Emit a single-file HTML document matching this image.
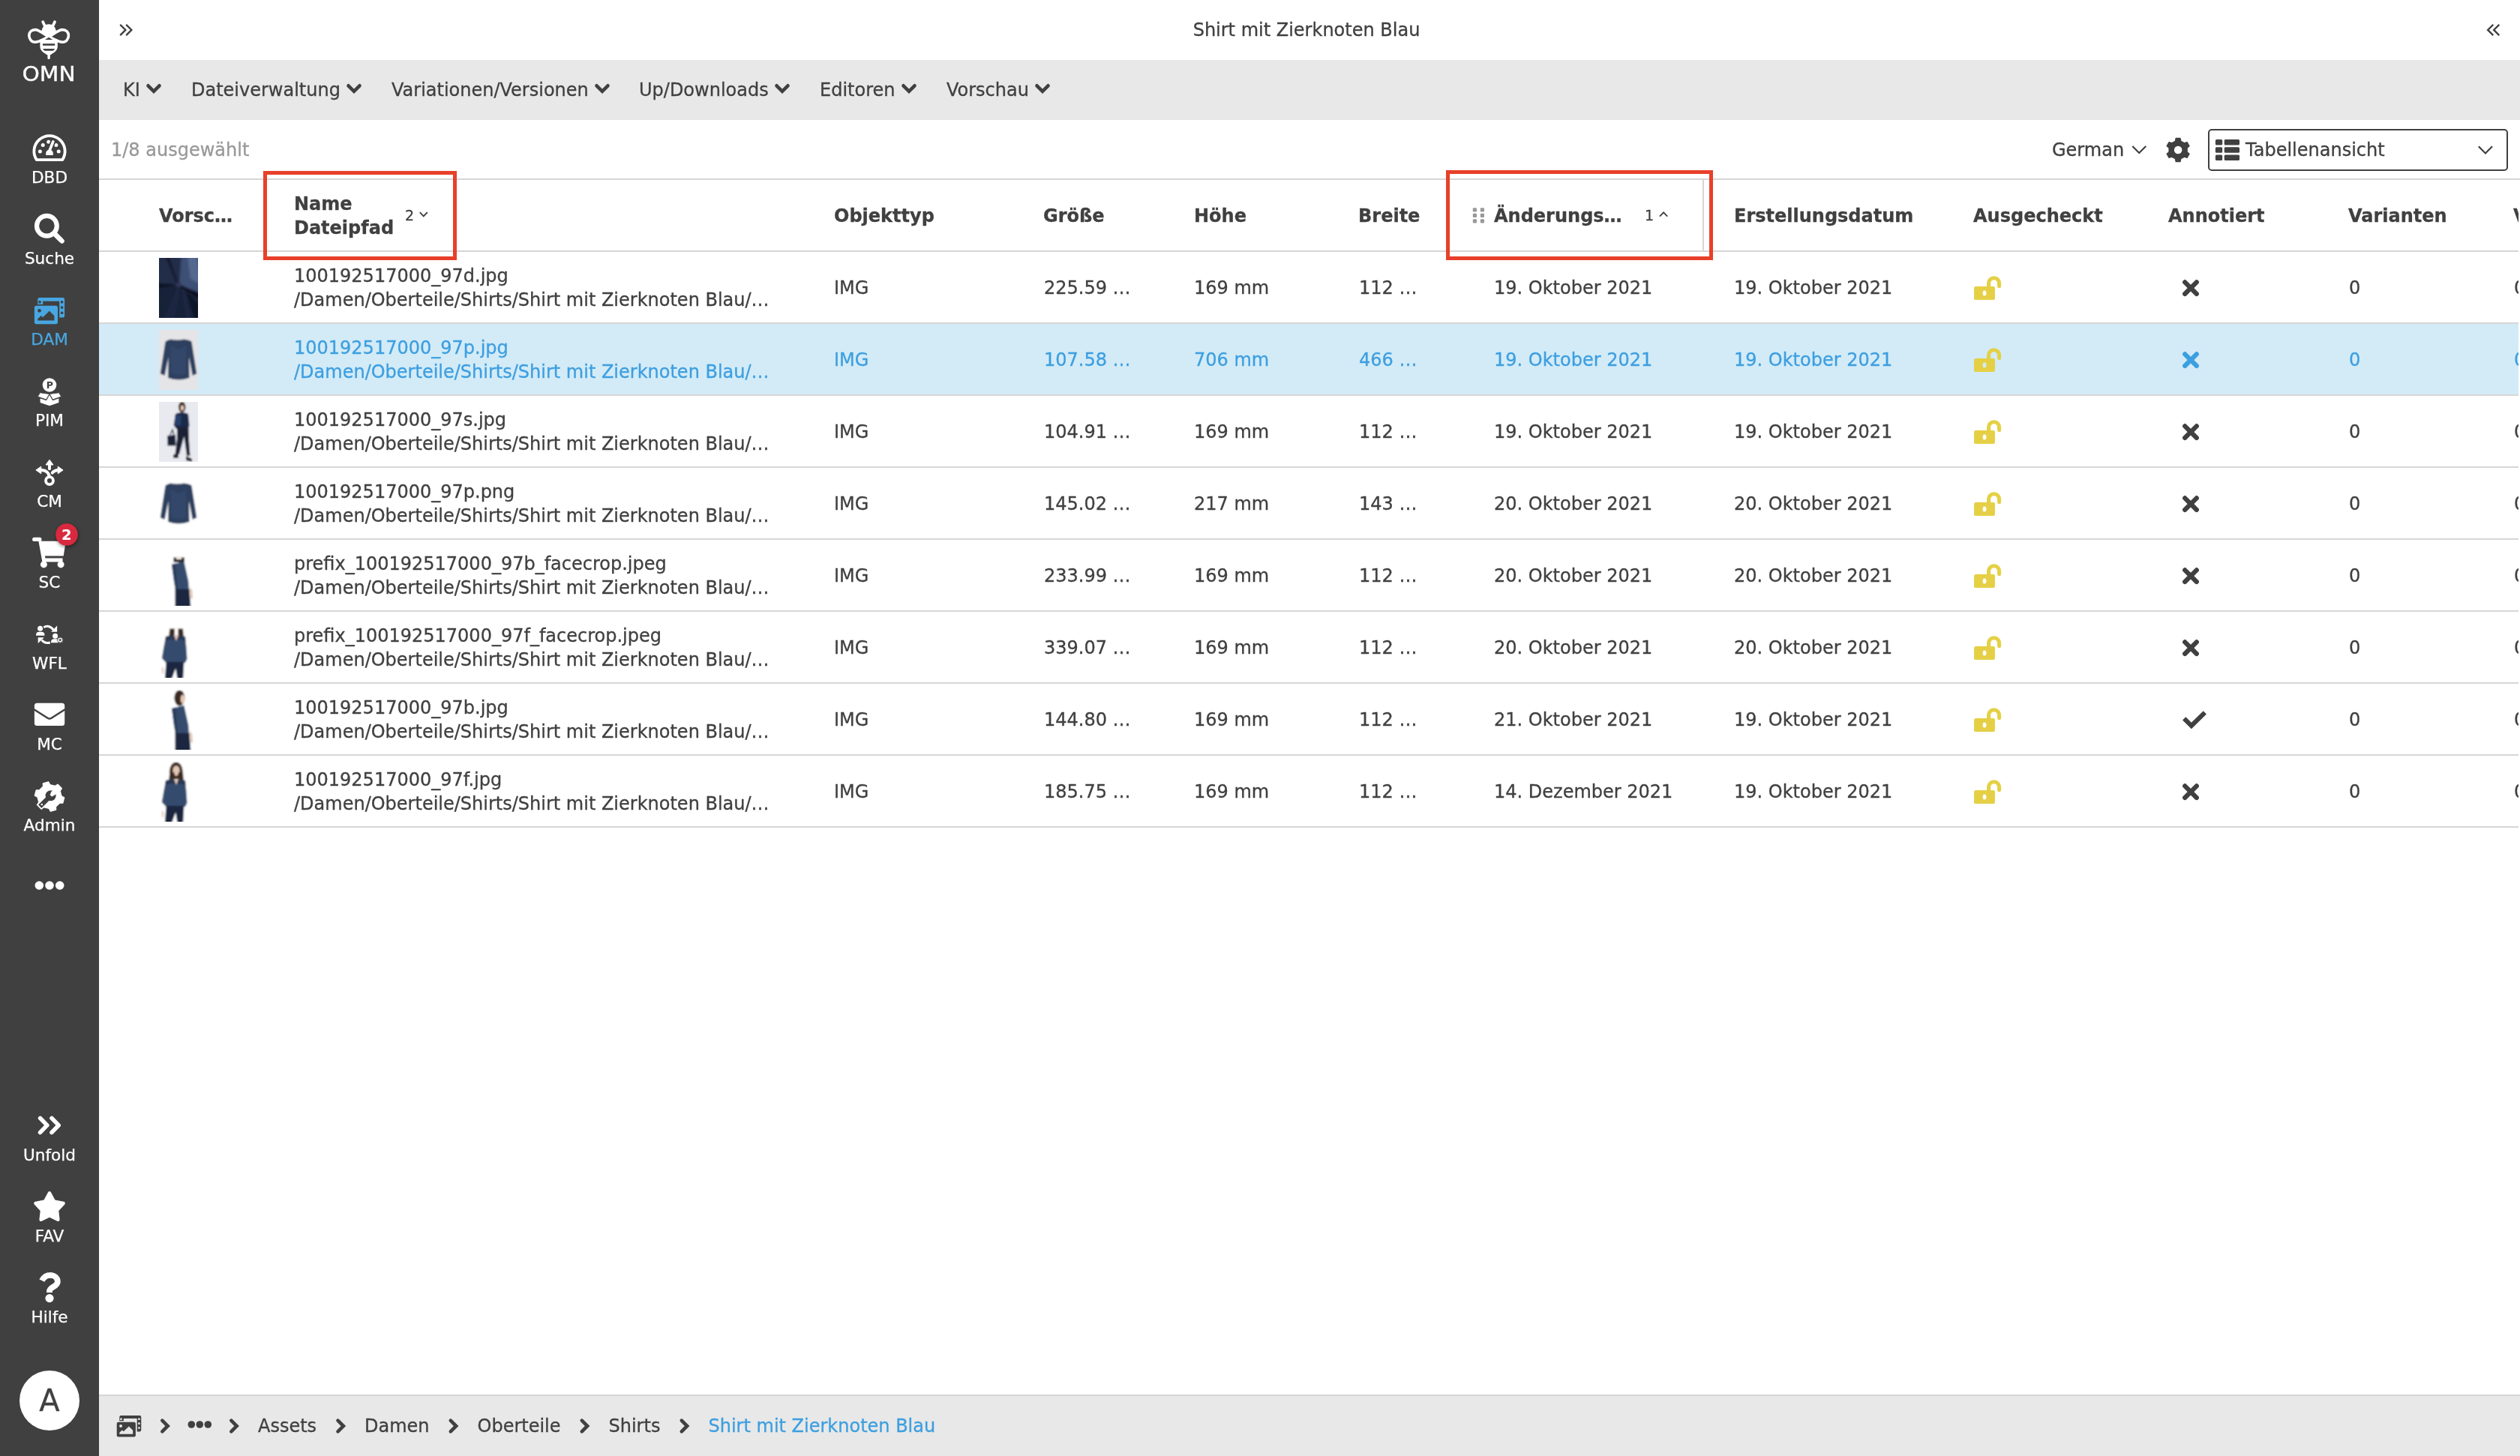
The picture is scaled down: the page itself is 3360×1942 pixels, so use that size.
<!DOCTYPE html>
<html lang="de"><head><meta charset="utf-8"><title>Shirt mit Zierknoten Blau</title>
<style>
*{box-sizing:border-box;margin:0;padding:0}
html,body{width:3360px;height:1942px;overflow:hidden;background:#fff}
body{font-family:"DejaVu Sans","Liberation Sans",sans-serif;font-size:24px;color:#404040;line-height:32px;position:relative;-webkit-text-stroke:0.3px currentColor}
#app{position:absolute;left:0;top:0;width:3360px;height:1942px;overflow:hidden;will-change:transform;background:#fff}
.abs{position:absolute}
svg{display:block;overflow:visible}
#side{position:absolute;left:0;top:0;width:132px;height:1942px;background:#404040;color:#fff}
.si{position:absolute;left:0;width:132px;text-align:center;font-size:21.6px;-webkit-text-stroke:0.25px currentColor;line-height:28px;color:#fff;white-space:nowrap}
#top{position:absolute;left:132px;top:0;width:3228px;height:80px;background:#fff}
#menu{position:absolute;left:132px;top:80px;width:3228px;height:80px;background:#e8e8e8}
.mi{position:absolute;top:0;height:80px;line-height:80px;white-space:nowrap}
.mi svg{position:absolute;top:31px}
#crumb{position:absolute;left:132px;top:1860px;width:3228px;height:82px;background:#e8e8e8;border-top:2px solid #d6d6d6}
.cr{position:absolute;top:1px;line-height:78px;white-space:nowrap}
.hl{position:absolute;left:132px;width:3228px;height:2px;background:#d6d6d6}
.th{position:absolute;font-weight:bold;white-space:nowrap;line-height:32px}
.td{position:absolute;white-space:nowrap;line-height:32px}
.row{position:absolute;left:132px;width:3226px;height:94px;overflow:hidden}
.row.sel{background:#d3ebf7;color:#3d9fe0}
.red{position:absolute;border:5px solid #e8402a}
</style></head>
<body>
<div id="app">
<div id="side">
<svg class="abs" style="left:0;top:0" width="132" height="1942" viewBox="0 0 132 1942">
<g fill="none" stroke="#fff" stroke-width="3.6" stroke-linecap="round">
<path d="M57.2,29.2 L60.2,35.5 M73,29.2 L70,35.5" stroke-width="3.8"/>
<path d="M65.1,49.3 C58,45.5 52.5,39.6 47,39.6 C42,39.6 38.8,43 38.8,47.6 C38.8,52.2 42,56.2 47,56.2 C52.5,56.2 58,52 65.1,49.3 Z" stroke-linejoin="round"/>
<path d="M65.1,49.3 C72.2,45.5 77.7,39.6 83.2,39.6 C88.2,39.6 91.4,43 91.4,47.6 C91.4,52.2 88.2,56.2 83.2,56.2 C77.7,56.2 72.2,52 65.1,49.3 Z" stroke-linejoin="round"/>
</g>
<path d="M55.6,40.5 A9.6,9.6 0 0 1 74.6,40.5 L74.3,43.5 L65.1,49.2 L55.9,43.5 Z" fill="#fff"/>
<path d="M53.4,55.5 Q53.4,53 56,53 L74.2,53 Q76.8,53 76.8,55.5 L76.8,62 C76.8,68 71,70.5 66.8,73.5 L66.8,77.5 Q66.8,79 65.1,79 Q63.4,79 63.4,77.5 L63.4,73.5 C59,70.5 53.4,68 53.4,62 Z" fill="#fff"/>
<path d="M60,53 L65.1,49.8 L70.2,53 Z" fill="#404040"/>
<rect x="57" y="58.2" width="16.2" height="2.6" fill="#404040"/>
<path d="M57.2,64.9 L73,64.9 C72.5,67 70.5,67.8 69,67.8 L61.2,67.8 C59.7,67.8 57.7,67 57.2,64.9 Z" fill="#404040"/>
<path d="M48.84,213.1 A20.6,20.6 0 1 1 83.16,213.1 Z" fill="none" stroke="#fff" stroke-width="3.8" stroke-linejoin="round"/>
<circle cx="53.4" cy="201.9" r="2.5" fill="#fff"/>
<circle cx="57.2" cy="193.4" r="2.5" fill="#fff"/>
<circle cx="78.2" cy="201.9" r="2.5" fill="#fff"/>
<circle cx="64.8" cy="189.3" r="2.5" fill="#fff"/><circle cx="74.8" cy="193.4" r="2.5" fill="#fff"/>
<path d="M65.2,203 L70.8,188.6" stroke="#404040" stroke-width="7" stroke-linecap="round"/>
<path d="M65.4,202.5 L70.8,188.8" stroke="#fff" stroke-width="3.6" stroke-linecap="round"/>
<path d="M61.2,207 L61.2,204.5 A4.8,4.8 0 0 1 70.8,204.5 L70.8,207 Z" fill="#fff"/>
<circle cx="62.4" cy="301.3" r="13.4" fill="none" stroke="#fff" stroke-width="6.2"/>
<path d="M72.6,311.5 L82.6,321.5" stroke="#fff" stroke-width="6.4" stroke-linecap="round"/>
<path d="M72,311 L81,320" stroke="#fff" stroke-width="6.4"/>
<g><path d="M52.8,397 L83.6,397 Q86.1,397 86.1,399.5 L86.1,420.9 Q86.1,423.4 83.6,423.4 L79.2,423.4 L79.2,401.8 L57.2,401.8 L57.2,405.9 L50.3,405.9 L50.3,399.5 Q50.3,397 52.8,397 Z" fill="#48a7e2"/><rect x="51.4" y="401.29999999999995" width="3.2" height="3.2" rx="0.6" fill="#404040"/><rect x="81.0" y="401.29999999999995" width="3.2" height="3.2" rx="0.6" fill="#404040"/><rect x="81.0" y="408.5" width="3.2" height="3.2" rx="0.6" fill="#404040"/><rect x="81.0" y="415.7" width="3.2" height="3.2" rx="0.6" fill="#404040"/><rect x="45.9" y="407.7" width="31.1" height="24.5" rx="2.8" fill="#48a7e2"/><circle cx="52.5" cy="414.3" r="2.4" fill="#404040"/><path d="M50.3,427.6 L50.3,425.2 L54.8,421 L57.1,423.3 L65.8,414.8 L72.4,421.3 L72.4,427.6 Z" fill="#404040"/></g>
<circle cx="66" cy="513.5" r="9.3" fill="#fff"/>
<text x="66.4" y="518.2" font-family="DejaVu Sans, Liberation Sans, sans-serif" font-weight="bold" font-size="12.5" text-anchor="middle" fill="#404040">P</text>
<path d="M53.6,531.5 L61.9,534.3 L66,527 L70.1,534.3 L78.4,531.5 L78.4,537 L66,541.2 L53.6,537 Z" fill="#fff"/>
<path d="M50.3,529 L53.4,523.8 L66,525.5 L61.6,533 Z" fill="#fff" stroke="#404040" stroke-width="0.9"/>
<path d="M81.7,529 L78.6,523.8 L66,525.5 L70.4,533 Z" fill="#fff" stroke="#404040" stroke-width="0.9"/>
<circle cx="66" cy="641.1" r="5" fill="none" stroke="#fff" stroke-width="3.8"/>
<path d="M66,613.3 L71,620 L61,620 Z" fill="#fff" stroke="#fff" stroke-width="1" stroke-linejoin="round"/>
<path d="M66,620 L66,625.2" stroke="#fff" stroke-width="3.9" stroke-linecap="round"/>
<path d="M47.9,627 L54.8,622.2 L54.8,631.8 Z" fill="#fff" stroke="#fff" stroke-width="1" stroke-linejoin="round"/>
<path d="M84.1,627 L77.2,622.2 L77.2,631.8 Z" fill="#fff" stroke="#fff" stroke-width="1" stroke-linejoin="round"/>
<path d="M54.8,627 C61.5,627 65.5,631 65.8,636.5" fill="none" stroke="#fff" stroke-width="4.1"/>
<path d="M77.2,627 C73.8,627.4 71.4,628.4 69.8,630.6" fill="none" stroke="#fff" stroke-width="4.1" stroke-linecap="round"/>
<rect x="43.1" y="716.8" width="12.4" height="5.2" rx="2.6" fill="#fff"/>
<path d="M51,719.5 L55.7,721.8 L87.8,721.8 L84.7,741.6 L59.9,741.6 L60.5,744.6 L83.5,744.6 L83.5,749.5 L56.4,749.5 Z" fill="#fff"/>
<circle cx="58.4" cy="752.9" r="4.5" fill="#fff"/><circle cx="81.1" cy="752.9" r="4.5" fill="#fff"/>
<defs><filter id="bs" x="-50%" y="-50%" width="200%" height="200%"><feGaussianBlur stdDeviation="2.2"/></filter></defs>
<circle cx="89.6" cy="715" r="15.2" fill="#000" opacity="0.4" filter="url(#bs)"/>
<circle cx="89" cy="713" r="14.8" fill="#d9293f"/>
<text x="88.9" y="720" font-family="DejaVu Sans, Liberation Sans, sans-serif" font-weight="bold" font-size="19.5" text-anchor="middle" fill="#fff">2</text>
<circle cx="53.6" cy="838.2" r="3.5" fill="#fff"/>
<path d="M48.1,847.8 L48.1,846.2 C48.1,843.8 50,842.7 52,842.7 L55.4,842.7 C57.4,842.7 59.4,843.8 59.4,846.2 L59.4,847.8 Z" fill="#fff"/>
<circle cx="73.6" cy="848.2" r="3.5" fill="#fff"/>
<path d="M68.1,857.3 L68.1,855.8 C68.1,853.4 70,852.3 72,852.3 L75.4,852.3 C77.4,852.3 77.8,853.4 77.8,855.8 L77.8,857.3 Z" fill="#fff"/>
<path d="M83.12,853.00 L84.25,853.06 L84.25,854.34 L83.12,854.40 L82.76,855.27 L83.52,856.11 L82.61,857.02 L81.77,856.26 L80.90,856.62 L80.84,857.75 L79.56,857.75 L79.50,856.62 L78.63,856.26 L77.79,857.02 L76.88,856.11 L77.64,855.27 L77.28,854.40 L76.15,854.34 L76.15,853.06 L77.28,853.00 L77.64,852.13 L76.88,851.29 L77.79,850.38 L78.63,851.14 L79.50,850.78 L79.56,849.65 L80.84,849.65 L80.90,850.78 L81.77,851.14 L82.61,850.38 L83.52,851.29 L82.76,852.13Z" fill="#fff" stroke="#404040" stroke-width="0.6"/><circle cx="80.2" cy="853.7" r="1.4" fill="#404040"/>
<path d="M58.4,836.8 C62,834.2 67.5,834.5 71.5,840.5" fill="none" stroke="#fff" stroke-width="3"/>
<path d="M76.1,834.4 L76.1,842.7 L68.2,842.7 Z" fill="#fff"/>
<path d="M50.7,850.2 L58.9,850.2 L50.7,858.1 Z" fill="#fff"/>
<path d="M55.6,853.8 C58,856.6 62,858.2 66.8,857" fill="none" stroke="#fff" stroke-width="3"/>
<rect x="45.9" y="937.8" width="40.3" height="30.3" rx="3.6" fill="#fff"/>
<path d="M45,946 L63.5,957.8 Q66,959.4 68.6,957.8 L87,946" fill="none" stroke="#404040" stroke-width="2.5"/>
<path d="M57.62,1048.99 L57.47,1044.85 L64.56,1042.95 L66.50,1046.61 L73.51,1048.49 L77.02,1046.29 L82.21,1051.48 L80.01,1054.99 L81.89,1062.00 L85.55,1063.94 L83.65,1071.03 L79.51,1070.88 L74.38,1076.01 L74.53,1080.15 L67.44,1082.05 L65.50,1078.39 L58.49,1076.51 L54.98,1078.71 L49.79,1073.52 L51.99,1070.01 L50.11,1063.00 L46.45,1061.06 L48.35,1053.97 L52.49,1054.12Z" fill="#fff" stroke="#fff" stroke-width="1.5" stroke-linejoin="round"/>
<path d="M55.4,1073.4 L66,1063" stroke="#fff" stroke-width="9.4" stroke-linecap="square"/>
<path d="M55.4,1073.4 L66,1063" stroke="#404040" stroke-width="6.2" stroke-linecap="square" stroke-linejoin="round"/>
<circle cx="67.6" cy="1061.2" r="7" fill="#404040"/>
<path d="M68.6,1055.5 L66.6,1060.2 L69.2,1062.6 L74.5,1059.5 L76,1052 Z" fill="#fff"/>
<circle cx="55.8" cy="1073" r="1.3" fill="#fff"/>
<circle cx="52.3" cy="1181" r="5.8" fill="#fff"/>
<circle cx="66" cy="1181" r="5.8" fill="#fff"/>
<circle cx="79.7" cy="1181" r="5.8" fill="#fff"/>
<path d="M53.6,1491.4 L62.8,1500.9 L53.6,1510.4 M69,1491.4 L78.2,1500.9 L69,1510.4" fill="none" stroke="#fff" stroke-width="5.6" stroke-linecap="round" stroke-linejoin="round"/>
<path d="M66,1591.2 L71.9,1602.3 L84.6,1604.9 L76,1614.3 L77.4,1626.8 L66,1621.2 L54.6,1626.8 L56,1614.3 L47.4,1604.9 L60.1,1602.3 Z" fill="#fff" stroke="#fff" stroke-width="4.4" stroke-linejoin="round"/>
<circle cx="66" cy="1731.6" r="5.6" fill="#fff"/>
<path d="M55.8,1708 C58.5,1703 62.5,1700.8 67,1700.8 C72.8,1700.8 76.8,1704.6 76.8,1709.4 C76.8,1716.5 66,1716 66,1722.2 L66,1724" fill="none" stroke="#fff" stroke-width="7.8"/>
</svg>
<div class="si" style="top:78.5px;left:-1px;font-size:27px;line-height:40px;transform:scaleX(1.1);-webkit-text-stroke:0.35px #fff">OMN</div>
<div class="si" style="top:223px">DBD</div>
<div class="si" style="top:331px">Suche</div>
<div class="si" style="top:439px;color:#48a7e2">DAM</div>
<div class="si" style="top:547px">PIM</div>
<div class="si" style="top:655px">CM</div>
<div class="si" style="top:763px">SC</div>
<div class="si" style="top:871px">WFL</div>
<div class="si" style="top:979px">MC</div>
<div class="si" style="top:1087px">Admin</div>
<div class="si" style="top:1527px">Unfold</div>
<div class="si" style="top:1635px">FAV</div>
<div class="si" style="top:1743px">Hilfe</div>
<div class="abs" style="left:26px;top:1828px;width:80px;height:80px;border-radius:50%;background:#fff;color:#404040;text-align:center;font-size:40px;line-height:81px">A</div>
</div>
<div id="top">
<div class="abs" style="left:0;top:1px;width:3220px;text-align:center;line-height:78px;white-space:nowrap">Shirt mit Zierknoten Blau</div>
<svg class="abs" style="left:0;top:0" width="3228" height="80" viewBox="132 0 3228 80"><g fill="none" stroke="#404040" stroke-width="2.3"><path d="M160.2,32.9 L167.4,39.9 L160.2,47.1 M168.2,32.9 L175.4,39.9 L168.2,47.1"/><path d="M3332.3,32.9 L3325.1,39.9 L3332.3,47.1 M3324.3,32.9 L3317.1,39.9 L3324.3,47.1"/></g></svg>
</div>
<div id="menu">
<div class="mi" style="left:32px">KI<svg width="20" height="16" viewBox="0 0 20 16" style="left:31px"><path d="M2.5,3.3 L10,10.8 L17.5,3.3" fill="none" stroke="#404040" stroke-width="4.6" stroke-linecap="round"/></svg></div>
<div class="mi" style="left:123px">Dateiverwaltung<svg width="20" height="16" viewBox="0 0 20 16" style="left:207px"><path d="M2.5,3.3 L10,10.8 L17.5,3.3" fill="none" stroke="#404040" stroke-width="4.6" stroke-linecap="round"/></svg></div>
<div class="mi" style="left:390px">Variationen/Versionen<svg width="20" height="16" viewBox="0 0 20 16" style="left:271px"><path d="M2.5,3.3 L10,10.8 L17.5,3.3" fill="none" stroke="#404040" stroke-width="4.6" stroke-linecap="round"/></svg></div>
<div class="mi" style="left:720px">Up/Downloads<svg width="20" height="16" viewBox="0 0 20 16" style="left:181px"><path d="M2.5,3.3 L10,10.8 L17.5,3.3" fill="none" stroke="#404040" stroke-width="4.6" stroke-linecap="round"/></svg></div>
<div class="mi" style="left:961px">Editoren<svg width="20" height="16" viewBox="0 0 20 16" style="left:109px"><path d="M2.5,3.3 L10,10.8 L17.5,3.3" fill="none" stroke="#404040" stroke-width="4.6" stroke-linecap="round"/></svg></div>
<div class="mi" style="left:1130px">Vorschau<svg width="20" height="16" viewBox="0 0 20 16" style="left:118px"><path d="M2.5,3.3 L10,10.8 L17.5,3.3" fill="none" stroke="#404040" stroke-width="4.6" stroke-linecap="round"/></svg></div>
</div>
<div class="abs" style="left:148px;top:161px;line-height:78px;color:#999;white-space:nowrap">1/8 ausgewählt</div>
<div class="abs" style="left:2736px;top:161px;line-height:78px;white-space:nowrap">German</div>
<div class="abs" style="left:2944px;top:172px;width:400px;height:56px;border:2px solid #404040;border-radius:5px"></div>
<div class="abs" style="left:2994px;top:161px;line-height:78px;white-space:nowrap">Tabellenansicht</div>
<svg class="abs" style="left:2700px;top:160px" width="660" height="78" viewBox="2700 160 660 78"><path d="M2843.3,195 L2852.2,204 L2861.2,195 M3304.8,195.2 L3313.9,204.5 L3323,195.2" fill="none" stroke="#404040" stroke-width="2.2"/><path d="M2900.39,188.17 L2901.12,184.38 L2907.08,184.38 L2907.81,188.17 L2912.49,190.87 L2916.14,189.61 L2919.12,194.77 L2916.20,197.30 L2916.20,202.70 L2919.12,205.23 L2916.14,210.39 L2912.49,209.13 L2907.81,211.83 L2907.08,215.62 L2901.12,215.62 L2900.39,211.83 L2895.71,209.13 L2892.06,210.39 L2889.08,205.23 L2892.00,202.70 L2892.00,197.30 L2889.08,194.77 L2892.06,189.61 L2895.71,190.87Z" fill="#404040" stroke="#404040" stroke-width="1.2" stroke-linejoin="round"/><circle cx="2904.1" cy="200" r="5.3" fill="#fff"/><rect x="2953.9" y="186" width="9.3" height="7.6" rx="1.6" fill="#404040"/><rect x="2965.7" y="186" width="20.3" height="7.6" rx="1.6" fill="#404040"/><rect x="2953.9" y="196.2" width="9.3" height="7.6" rx="1.6" fill="#404040"/><rect x="2965.7" y="196.2" width="20.3" height="7.6" rx="1.6" fill="#404040"/><rect x="2953.9" y="206.4" width="9.3" height="7.6" rx="1.6" fill="#404040"/><rect x="2965.7" y="206.4" width="20.3" height="7.6" rx="1.6" fill="#404040"/></svg>
<div class="hl" style="top:238px"></div>
<div class="hl" style="top:334px;width:3226px"></div>
<div class="th" style="left:212px;top:272px;max-width:3146px;overflow:hidden">Vorsc…</div>
<div class="th" style="left:1112px;top:272px;max-width:2246px;overflow:hidden">Objekttyp</div>
<div class="th" style="left:1391px;top:272px;max-width:1967px;overflow:hidden">Größe</div>
<div class="th" style="left:1592px;top:272px;max-width:1766px;overflow:hidden">Höhe</div>
<div class="th" style="left:1811px;top:272px;max-width:1547px;overflow:hidden">Breite</div>
<div class="th" style="left:1992px;top:272px;max-width:1366px;overflow:hidden">Änderungs…</div>
<div class="th" style="left:2312px;top:272px;max-width:1046px;overflow:hidden">Erstellungsdatum</div>
<div class="th" style="left:2631px;top:272px;max-width:727px;overflow:hidden">Ausgecheckt</div>
<div class="th" style="left:2891px;top:272px;max-width:467px;overflow:hidden">Annotiert</div>
<div class="th" style="left:3131px;top:272px;max-width:227px;overflow:hidden">Varianten</div>
<div class="th" style="left:3351px;top:272px;max-width:7px;overflow:hidden">Versionen</div>
<div class="th" style="left:392px;top:256px;line-height:32px">Name<br>Dateipfad</div>
<div class="abs" style="left:540px;top:271px;font-size:19px;line-height:32px">2</div>
<div class="abs" style="left:2193px;top:271px;font-size:19px;line-height:32px">1</div>
<svg class="abs" style="left:540px;top:270px" width="1700" height="40" viewBox="540 270 1700 40"><path d="M559.8,283.2 L564.8,288.4 L569.8,283.2 M2213,288.6 L2218.1,283.4 L2223.2,288.6" fill="none" stroke="#404040" stroke-width="1.9"/><rect x="1963.8" y="277.2" width="5.2" height="5.2" rx="1.2" fill="#999"/><rect x="1963.8" y="284.7" width="5.2" height="5.2" rx="1.2" fill="#999"/><rect x="1963.8" y="292.2" width="5.2" height="5.2" rx="1.2" fill="#999"/><rect x="1973.8" y="277.2" width="5.2" height="5.2" rx="1.2" fill="#999"/><rect x="1973.8" y="284.7" width="5.2" height="5.2" rx="1.2" fill="#999"/><rect x="1973.8" y="292.2" width="5.2" height="5.2" rx="1.2" fill="#999"/></svg>
<div class="row" style="top:336px">
<svg class="abs" style="left:80px;top:8px" width="52" height="80" viewBox="0 0 52 80"><defs><filter id="b0" x="-10%" y="-10%" width="120%" height="120%"><feGaussianBlur stdDeviation="1.7"/></filter><clipPath id="c0"><rect width="52" height="80"/></clipPath></defs><rect width="52" height="80" fill="#182038"/><g clip-path="url(#c0)"><g filter="url(#b0)"><rect x="-4" y="-4" width="60" height="88" fill="#182038"/><path d="M-4,-4 L30,-4 L27,35 L-4,33 Z" fill="#232d48"/><path d="M7,-4 L13,-4 L26,33 L23,34 Z" fill="#161d33"/><path d="M30,-4 L56,-4 L56,47 L40,41 L27,35 Z" fill="#3c4f74"/><path d="M38,-4 L50,-4 L54,34 L42,28 Z" fill="#556990"/><path d="M-4,33.5 L26,36 L-4,41 Z" fill="#0e1426"/><path d="M27,36 L56,48 L56,56 L30,40 Z" fill="#0b1122"/><ellipse cx="26" cy="36" rx="4" ry="3" fill="#33375a"/><path d="M24,40 L6,84 L20,84 L28,42 Z" fill="#1f2842"/><path d="M30,41 L36,84 L44,84 L34,42 Z" fill="#1c2540"/><path d="M36,44 L56,64 L56,84 L48,84 Z" fill="#0e1528"/></g></g></svg>
<div class="td" style="left:260px;top:16px">100192517000_97d.jpg<br>/Damen/Oberteile/Shirts/Shirt mit Zierknoten Blau/…</div>
<div class="td" style="left:980px;top:32px">IMG</div>
<div class="td" style="left:1260px;top:32px">225.59 …</div>
<div class="td" style="left:1460px;top:32px">169 mm</div>
<div class="td" style="left:1680px;top:32px">112 …</div>
<div class="td" style="left:1860px;top:32px">19. Oktober 2021</div>
<div class="td" style="left:2180px;top:32px">19. Oktober 2021</div>
<div class="td" style="left:3000px;top:32px">0</div>
<div class="td" style="left:3220px;top:32px">0</div>
<svg class="abs" style="left:2490px;top:0" width="340" height="94" viewBox="2622 336 340 94"><rect x="2632" y="382" width="28" height="18" rx="2.6" fill="#e5d045"/><ellipse cx="2646" cy="391.1" rx="2.4" ry="3.5" fill="#fff"/><path d="M2651.6,383 L2651.6,377.7 A7,7 0 0 1 2665.6,377.7 L2665.6,381.4" fill="none" stroke="#e5d045" stroke-width="5.1" stroke-linecap="round"/><path d="M2913.2,376.4 L2928.8,392 M2928.8,376.4 L2913.2,392" stroke="#404040" stroke-width="6.2" stroke-linecap="round"/></svg>
</div>
<div class="hl" style="top:430px;width:3226px"></div>
<div class="row sel" style="top:432px">
<svg class="abs" style="left:80px;top:8px" width="52" height="80" viewBox="0 0 52 80"><defs><filter id="b1" x="-10%" y="-10%" width="120%" height="120%"><feGaussianBlur stdDeviation="1.25"/></filter><clipPath id="c1"><rect width="52" height="80"/></clipPath></defs><rect width="52" height="80" fill="#e5e5e7"/><g clip-path="url(#c1)"><g filter="url(#b1)"><rect x="-4" y="-4" width="60" height="88" fill="#e5e5e7"/><path d="M16,12.5 Q12,13 8.5,15.5 L1.7,58.5 L7.6,61 L12.6,36 L12,64 Q26,69 40.5,64 L40,36 L44.6,61 L50.3,58.5 L43.5,15.5 Q40,13 33,12.5 Q25,16.5 16,12.5 Z" fill="#2d3f5e"/><path d="M16,20 Q26,30 36,20 L36,58 Q26,62 16,58 Z" fill="#364d74" opacity="0.55"/><path d="M17,12.6 Q25,16.8 32.5,12.6 Q25,14.6 17,12.6Z" fill="#1b2640"/></g></g></svg>
<div class="td" style="left:260px;top:16px">100192517000_97p.jpg<br>/Damen/Oberteile/Shirts/Shirt mit Zierknoten Blau/…</div>
<div class="td" style="left:980px;top:32px">IMG</div>
<div class="td" style="left:1260px;top:32px">107.58 …</div>
<div class="td" style="left:1460px;top:32px">706 mm</div>
<div class="td" style="left:1680px;top:32px">466 …</div>
<div class="td" style="left:1860px;top:32px">19. Oktober 2021</div>
<div class="td" style="left:2180px;top:32px">19. Oktober 2021</div>
<div class="td" style="left:3000px;top:32px">0</div>
<div class="td" style="left:3220px;top:32px">0</div>
<svg class="abs" style="left:2490px;top:0" width="340" height="94" viewBox="2622 336 340 94"><rect x="2632" y="382" width="28" height="18" rx="2.6" fill="#e5d045"/><ellipse cx="2646" cy="391.1" rx="2.4" ry="3.5" fill="#d3ebf7"/><path d="M2651.6,383 L2651.6,377.7 A7,7 0 0 1 2665.6,377.7 L2665.6,381.4" fill="none" stroke="#e5d045" stroke-width="5.1" stroke-linecap="round"/><path d="M2913.2,376.4 L2928.8,392 M2928.8,376.4 L2913.2,392" stroke="#3d9fe0" stroke-width="6.2" stroke-linecap="round"/></svg>
</div>
<div class="hl" style="top:526px;width:3226px"></div>
<div class="row" style="top:528px">
<svg class="abs" style="left:80px;top:8px" width="52" height="80" viewBox="0 0 52 80"><defs><filter id="b2" x="-10%" y="-10%" width="120%" height="120%"><feGaussianBlur stdDeviation="1.25"/></filter><clipPath id="c2"><rect width="52" height="80"/></clipPath></defs><rect width="52" height="80" fill="#e9eaef"/><g clip-path="url(#c2)"><g filter="url(#b2)"><rect x="-4" y="-4" width="60" height="88" fill="#e9eaef"/><ellipse cx="30.7" cy="7" rx="4.8" ry="7" fill="#3b2a22"/><ellipse cx="31" cy="8" rx="2.2" ry="3.6" fill="#e6c7b4"/><path d="M22,16 Q30,12 39,16 L40.6,32 L38,36 L23,36 L19.5,31 Z" fill="#1f2c4a"/><path d="M21,18 L29,18 L29,31 L21,31 Z" fill="#2a4674" opacity="0.8"/><path d="M24,34 L39.5,34 L40,52 L41.5,72 L37,72 L33.5,46 L27,70 L21.5,70 L24,50 Z" fill="#1a2236"/><path d="M11,45 L22,44 L22.5,58.5 L11.5,58.5 Z" fill="#1d2338"/><path d="M15,44 L18,37 L20,44" stroke="#2a2f45" stroke-width="1.4" fill="none"/><path d="M19,70 L26,70 L26,75 L19,75Z M36,72 L44,76 L44,80 L36,78Z" fill="#2b2b35"/></g></g></svg>
<div class="td" style="left:260px;top:16px">100192517000_97s.jpg<br>/Damen/Oberteile/Shirts/Shirt mit Zierknoten Blau/…</div>
<div class="td" style="left:980px;top:32px">IMG</div>
<div class="td" style="left:1260px;top:32px">104.91 …</div>
<div class="td" style="left:1460px;top:32px">169 mm</div>
<div class="td" style="left:1680px;top:32px">112 …</div>
<div class="td" style="left:1860px;top:32px">19. Oktober 2021</div>
<div class="td" style="left:2180px;top:32px">19. Oktober 2021</div>
<div class="td" style="left:3000px;top:32px">0</div>
<div class="td" style="left:3220px;top:32px">0</div>
<svg class="abs" style="left:2490px;top:0" width="340" height="94" viewBox="2622 336 340 94"><rect x="2632" y="382" width="28" height="18" rx="2.6" fill="#e5d045"/><ellipse cx="2646" cy="391.1" rx="2.4" ry="3.5" fill="#fff"/><path d="M2651.6,383 L2651.6,377.7 A7,7 0 0 1 2665.6,377.7 L2665.6,381.4" fill="none" stroke="#e5d045" stroke-width="5.1" stroke-linecap="round"/><path d="M2913.2,376.4 L2928.8,392 M2928.8,376.4 L2913.2,392" stroke="#404040" stroke-width="6.2" stroke-linecap="round"/></svg>
</div>
<div class="hl" style="top:622px;width:3226px"></div>
<div class="row" style="top:624px">
<svg class="abs" style="left:80px;top:8px" width="52" height="80" viewBox="0 0 52 80"><defs><filter id="b3" x="-10%" y="-10%" width="120%" height="120%"><feGaussianBlur stdDeviation="1.25"/></filter><clipPath id="c3"><rect width="52" height="80"/></clipPath></defs><rect width="52" height="80" fill="#fff"/><g clip-path="url(#c3)"><g filter="url(#b3)"><rect x="-4" y="-4" width="60" height="88" fill="#fff"/><path d="M16,12.5 Q12,13 8.5,15.5 L1.7,58.5 L7.6,61 L12.6,36 L12,64 Q26,69 40.5,64 L40,36 L44.6,61 L50.3,58.5 L43.5,15.5 Q40,13 33,12.5 Q25,16.5 16,12.5 Z" fill="#2d3f5e"/><path d="M16,20 Q26,30 36,20 L36,58 Q26,62 16,58 Z" fill="#364d74" opacity="0.55"/><path d="M17,12.6 Q25,16.8 32.5,12.6 Q25,14.6 17,12.6Z" fill="#1b2640"/></g></g></svg>
<div class="td" style="left:260px;top:16px">100192517000_97p.png<br>/Damen/Oberteile/Shirts/Shirt mit Zierknoten Blau/…</div>
<div class="td" style="left:980px;top:32px">IMG</div>
<div class="td" style="left:1260px;top:32px">145.02 …</div>
<div class="td" style="left:1460px;top:32px">217 mm</div>
<div class="td" style="left:1680px;top:32px">143 …</div>
<div class="td" style="left:1860px;top:32px">20. Oktober 2021</div>
<div class="td" style="left:2180px;top:32px">20. Oktober 2021</div>
<div class="td" style="left:3000px;top:32px">0</div>
<div class="td" style="left:3220px;top:32px">0</div>
<svg class="abs" style="left:2490px;top:0" width="340" height="94" viewBox="2622 336 340 94"><rect x="2632" y="382" width="28" height="18" rx="2.6" fill="#e5d045"/><ellipse cx="2646" cy="391.1" rx="2.4" ry="3.5" fill="#fff"/><path d="M2651.6,383 L2651.6,377.7 A7,7 0 0 1 2665.6,377.7 L2665.6,381.4" fill="none" stroke="#e5d045" stroke-width="5.1" stroke-linecap="round"/><path d="M2913.2,376.4 L2928.8,392 M2928.8,376.4 L2913.2,392" stroke="#404040" stroke-width="6.2" stroke-linecap="round"/></svg>
</div>
<div class="hl" style="top:718px;width:3226px"></div>
<div class="row" style="top:720px">
<svg class="abs" style="left:80px;top:8px" width="52" height="80" viewBox="0 0 52 80"><defs><filter id="b4" x="-10%" y="-10%" width="120%" height="120%"><feGaussianBlur stdDeviation="1.25"/></filter><clipPath id="c4"><rect width="52" height="80"/></clipPath></defs><rect width="52" height="80" fill="#fff"/><g clip-path="url(#c4)"><g filter="url(#b4)"><rect x="-4" y="-4" width="60" height="88" fill="#fff"/><path d="M19.5,15.5 L34,15.5 L34,22 L19.5,22Z" fill="#2c2628"/><rect x="23" y="14" width="7" height="4" fill="#f3e6df"/><path d="M17,24.8 L33.4,20.8 L39.3,47.2 L40,60.4 L22.2,60.4 L19.5,44.6 Z" fill="#364c6e"/><path d="M17,24.8 L22,23.5 L25,60.4 L22.2,60.4 L19.5,44.6 Z" fill="#2a3b5a" opacity="0.8"/><path d="M21.5,57.8 L40.6,57.8 L42.6,84 L21.5,84 Z" fill="#1b2640"/><path d="M40.5,54 L44.5,60 L45,71 L42.5,70 Z" fill="#e6c7b4"/></g></g></svg>
<div class="td" style="left:260px;top:16px">prefix_100192517000_97b_facecrop.jpeg<br>/Damen/Oberteile/Shirts/Shirt mit Zierknoten Blau/…</div>
<div class="td" style="left:980px;top:32px">IMG</div>
<div class="td" style="left:1260px;top:32px">233.99 …</div>
<div class="td" style="left:1460px;top:32px">169 mm</div>
<div class="td" style="left:1680px;top:32px">112 …</div>
<div class="td" style="left:1860px;top:32px">20. Oktober 2021</div>
<div class="td" style="left:2180px;top:32px">20. Oktober 2021</div>
<div class="td" style="left:3000px;top:32px">0</div>
<div class="td" style="left:3220px;top:32px">0</div>
<svg class="abs" style="left:2490px;top:0" width="340" height="94" viewBox="2622 336 340 94"><rect x="2632" y="382" width="28" height="18" rx="2.6" fill="#e5d045"/><ellipse cx="2646" cy="391.1" rx="2.4" ry="3.5" fill="#fff"/><path d="M2651.6,383 L2651.6,377.7 A7,7 0 0 1 2665.6,377.7 L2665.6,381.4" fill="none" stroke="#e5d045" stroke-width="5.1" stroke-linecap="round"/><path d="M2913.2,376.4 L2928.8,392 M2928.8,376.4 L2913.2,392" stroke="#404040" stroke-width="6.2" stroke-linecap="round"/></svg>
</div>
<div class="hl" style="top:814px;width:3226px"></div>
<div class="row" style="top:816px">
<svg class="abs" style="left:80px;top:8px" width="52" height="80" viewBox="0 0 52 80"><defs><filter id="b5" x="-10%" y="-10%" width="120%" height="120%"><feGaussianBlur stdDeviation="1.25"/></filter><clipPath id="c5"><rect width="52" height="80"/></clipPath></defs><rect width="52" height="80" fill="#fff"/><g clip-path="url(#c5)"><g filter="url(#b5)"><rect x="-4" y="-4" width="60" height="88" fill="#fff"/><path d="M14.2,14.5 L20.8,14.5 L20.8,27 L13,27 Z M25.5,14.5 L32,14.5 L33,27 L25.5,27 Z" fill="#3b2a22"/><path d="M9,25 Q22,21 35,25 L36.5,40 L37.5,55 L35,60 L9,60 L7.6,58 L3.7,54 L6.5,38 Z" fill="#364c6e"/><path d="M9,25 Q22,21 35,25 L35.5,31 Q22,27 8,31 Z" fill="#27354f" opacity="0.8"/><path d="M20,23 L23,31 L26,23 Z" fill="#e6c7b4"/><path d="M9.6,58.7 L33.4,58.7 L32,84 L24.8,84 L22.2,67.3 L16.2,84 L7.6,84 Z" fill="#1b2640"/><path d="M3.7,66 L6,66 L6,74 L4,74Z" fill="#e6c7b4"/></g></g></svg>
<div class="td" style="left:260px;top:16px">prefix_100192517000_97f_facecrop.jpeg<br>/Damen/Oberteile/Shirts/Shirt mit Zierknoten Blau/…</div>
<div class="td" style="left:980px;top:32px">IMG</div>
<div class="td" style="left:1260px;top:32px">339.07 …</div>
<div class="td" style="left:1460px;top:32px">169 mm</div>
<div class="td" style="left:1680px;top:32px">112 …</div>
<div class="td" style="left:1860px;top:32px">20. Oktober 2021</div>
<div class="td" style="left:2180px;top:32px">20. Oktober 2021</div>
<div class="td" style="left:3000px;top:32px">0</div>
<div class="td" style="left:3220px;top:32px">0</div>
<svg class="abs" style="left:2490px;top:0" width="340" height="94" viewBox="2622 336 340 94"><rect x="2632" y="382" width="28" height="18" rx="2.6" fill="#e5d045"/><ellipse cx="2646" cy="391.1" rx="2.4" ry="3.5" fill="#fff"/><path d="M2651.6,383 L2651.6,377.7 A7,7 0 0 1 2665.6,377.7 L2665.6,381.4" fill="none" stroke="#e5d045" stroke-width="5.1" stroke-linecap="round"/><path d="M2913.2,376.4 L2928.8,392 M2928.8,376.4 L2913.2,392" stroke="#404040" stroke-width="6.2" stroke-linecap="round"/></svg>
</div>
<div class="hl" style="top:910px;width:3226px"></div>
<div class="row" style="top:912px">
<svg class="abs" style="left:80px;top:8px" width="52" height="80" viewBox="0 0 52 80"><defs><filter id="b6" x="-10%" y="-10%" width="120%" height="120%"><feGaussianBlur stdDeviation="1.25"/></filter><clipPath id="c6"><rect width="52" height="80"/></clipPath></defs><rect width="52" height="80" fill="#fff"/><g clip-path="url(#c6)"><g filter="url(#b6)"><rect x="-4" y="-4" width="60" height="88" fill="#fff"/><ellipse cx="27.4" cy="11" rx="7" ry="10.5" fill="#3b2a22"/><ellipse cx="31.6" cy="12.5" rx="2.8" ry="6" fill="#e6c7b4"/><path d="M17,24.8 L33.4,20.8 L39.3,47.2 L40,60.4 L22.2,60.4 L19.5,44.6 Z" fill="#364c6e"/><path d="M17,24.8 L22,23.5 L25,60.4 L22.2,60.4 L19.5,44.6 Z" fill="#2a3b5a" opacity="0.8"/><path d="M21.5,57.8 L40.6,57.8 L42.6,84 L21.5,84 Z" fill="#1b2640"/><path d="M40.5,54 L44.5,60 L45,71 L42.5,70 Z" fill="#e6c7b4"/></g></g></svg>
<div class="td" style="left:260px;top:16px">100192517000_97b.jpg<br>/Damen/Oberteile/Shirts/Shirt mit Zierknoten Blau/…</div>
<div class="td" style="left:980px;top:32px">IMG</div>
<div class="td" style="left:1260px;top:32px">144.80 …</div>
<div class="td" style="left:1460px;top:32px">169 mm</div>
<div class="td" style="left:1680px;top:32px">112 …</div>
<div class="td" style="left:1860px;top:32px">21. Oktober 2021</div>
<div class="td" style="left:2180px;top:32px">19. Oktober 2021</div>
<div class="td" style="left:3000px;top:32px">0</div>
<div class="td" style="left:3220px;top:32px">0</div>
<svg class="abs" style="left:2490px;top:0" width="340" height="94" viewBox="2622 336 340 94"><rect x="2632" y="382" width="28" height="18" rx="2.6" fill="#e5d045"/><ellipse cx="2646" cy="391.1" rx="2.4" ry="3.5" fill="#fff"/><path d="M2651.6,383 L2651.6,377.7 A7,7 0 0 1 2665.6,377.7 L2665.6,381.4" fill="none" stroke="#e5d045" stroke-width="5.1" stroke-linecap="round"/><path d="M2914.3,384.4 L2921.9,392 L2937.7,376.5" transform="translate(0,0)" fill="none" stroke="#404040" stroke-width="6" stroke-linecap="square" stroke-linejoin="miter"/></svg>
</div>
<div class="hl" style="top:1006px;width:3226px"></div>
<div class="row" style="top:1008px">
<svg class="abs" style="left:80px;top:8px" width="52" height="80" viewBox="0 0 52 80"><defs><filter id="b7" x="-10%" y="-10%" width="120%" height="120%"><feGaussianBlur stdDeviation="1.25"/></filter><clipPath id="c7"><rect width="52" height="80"/></clipPath></defs><rect width="52" height="80" fill="#fff"/><g clip-path="url(#c7)"><g filter="url(#b7)"><rect x="-4" y="-4" width="60" height="88" fill="#fff"/><ellipse cx="22.8" cy="13.5" rx="9" ry="13" fill="#3b2a22"/><ellipse cx="23" cy="12" rx="4.6" ry="6.8" fill="#e6c7b4"/><path d="M14.2,14.5 L20.8,14.5 L20.8,27 L13,27 Z M25.5,14.5 L32,14.5 L33,27 L25.5,27 Z" fill="#3b2a22"/><path d="M9,25 Q22,21 35,25 L36.5,40 L37.5,55 L35,60 L9,60 L7.6,58 L3.7,54 L6.5,38 Z" fill="#364c6e"/><path d="M9,25 Q22,21 35,25 L35.5,31 Q22,27 8,31 Z" fill="#27354f" opacity="0.8"/><path d="M20,23 L23,31 L26,23 Z" fill="#e6c7b4"/><path d="M9.6,58.7 L33.4,58.7 L32,84 L24.8,84 L22.2,67.3 L16.2,84 L7.6,84 Z" fill="#1b2640"/><path d="M3.7,66 L6,66 L6,74 L4,74Z" fill="#e6c7b4"/></g></g></svg>
<div class="td" style="left:260px;top:16px">100192517000_97f.jpg<br>/Damen/Oberteile/Shirts/Shirt mit Zierknoten Blau/…</div>
<div class="td" style="left:980px;top:32px">IMG</div>
<div class="td" style="left:1260px;top:32px">185.75 …</div>
<div class="td" style="left:1460px;top:32px">169 mm</div>
<div class="td" style="left:1680px;top:32px">112 …</div>
<div class="td" style="left:1860px;top:32px">14. Dezember 2021</div>
<div class="td" style="left:2180px;top:32px">19. Oktober 2021</div>
<div class="td" style="left:3000px;top:32px">0</div>
<div class="td" style="left:3220px;top:32px">0</div>
<svg class="abs" style="left:2490px;top:0" width="340" height="94" viewBox="2622 336 340 94"><rect x="2632" y="382" width="28" height="18" rx="2.6" fill="#e5d045"/><ellipse cx="2646" cy="391.1" rx="2.4" ry="3.5" fill="#fff"/><path d="M2651.6,383 L2651.6,377.7 A7,7 0 0 1 2665.6,377.7 L2665.6,381.4" fill="none" stroke="#e5d045" stroke-width="5.1" stroke-linecap="round"/><path d="M2913.2,376.4 L2928.8,392 M2928.8,376.4 L2913.2,392" stroke="#404040" stroke-width="6.2" stroke-linecap="round"/></svg>
</div>
<div class="hl" style="top:1102px;width:3226px"></div>
<div class="red" style="left:351px;top:228px;width:258px;height:119px"></div>
<div class="red" style="left:1928px;top:227px;width:356px;height:120px"></div>
<div class="abs" style="left:2270px;top:240px;width:2px;height:94px;background:#d6d6d6"></div>
<div id="crumb">
<div class="cr" style="left:212px;color:#404040">Assets</div>
<div class="cr" style="left:354px;color:#404040">Damen</div>
<div class="cr" style="left:504.5px;color:#404040">Oberteile</div>
<div class="cr" style="left:679.5px;color:#404040">Shirts</div>
<div class="cr" style="left:812.5px;color:#3d9fe0">Shirt mit Zierknoten Blau</div>
<svg class="abs" style="left:0;top:-2px" width="900" height="82" viewBox="132 1860 900 82"><g transform="translate(155.7,1888) scale(0.81) translate(-45.9,-397)"><path d="M52.8,397 L83.6,397 Q86.1,397 86.1,399.5 L86.1,420.9 Q86.1,423.4 83.6,423.4 L79.2,423.4 L79.2,401.8 L57.2,401.8 L57.2,405.9 L50.3,405.9 L50.3,399.5 Q50.3,397 52.8,397 Z" fill="#404040"/><rect x="51.4" y="401.29999999999995" width="3.2" height="3.2" rx="0.6" fill="#e8e8e8"/><rect x="81.0" y="401.29999999999995" width="3.2" height="3.2" rx="0.6" fill="#e8e8e8"/><rect x="81.0" y="408.5" width="3.2" height="3.2" rx="0.6" fill="#e8e8e8"/><rect x="81.0" y="415.7" width="3.2" height="3.2" rx="0.6" fill="#e8e8e8"/><rect x="45.9" y="407.7" width="31.1" height="24.5" rx="2.8" fill="#404040"/><circle cx="52.5" cy="414.3" r="2.4" fill="#e8e8e8"/><path d="M50.3,427.6 L50.3,425.2 L54.8,421 L57.1,423.3 L65.8,414.8 L72.4,421.3 L72.4,427.6 Z" fill="#e8e8e8"/></g><path d="M216.3,1894.6 L223.70000000000002,1902 L216.3,1909.4" fill="none" stroke="#404040" stroke-width="4.6" stroke-linecap="round"/><path d="M308.3,1894.6 L315.7,1902 L308.3,1909.4" fill="none" stroke="#404040" stroke-width="4.6" stroke-linecap="round"/><path d="M450.5,1894.6 L457.9,1902 L450.5,1909.4" fill="none" stroke="#404040" stroke-width="4.6" stroke-linecap="round"/><path d="M600.8,1894.6 L608.1999999999999,1902 L600.8,1909.4" fill="none" stroke="#404040" stroke-width="4.6" stroke-linecap="round"/><path d="M775.8,1894.6 L783.1999999999999,1902 L775.8,1909.4" fill="none" stroke="#404040" stroke-width="4.6" stroke-linecap="round"/><path d="M908.8,1894.6 L916.1999999999999,1902 L908.8,1909.4" fill="none" stroke="#404040" stroke-width="4.6" stroke-linecap="round"/><circle cx="255.3" cy="1900" r="4.8" fill="#404040"/><circle cx="266.3" cy="1900" r="4.8" fill="#404040"/><circle cx="277.3" cy="1900" r="4.8" fill="#404040"/></svg>
</div>
</div>
</body></html>
